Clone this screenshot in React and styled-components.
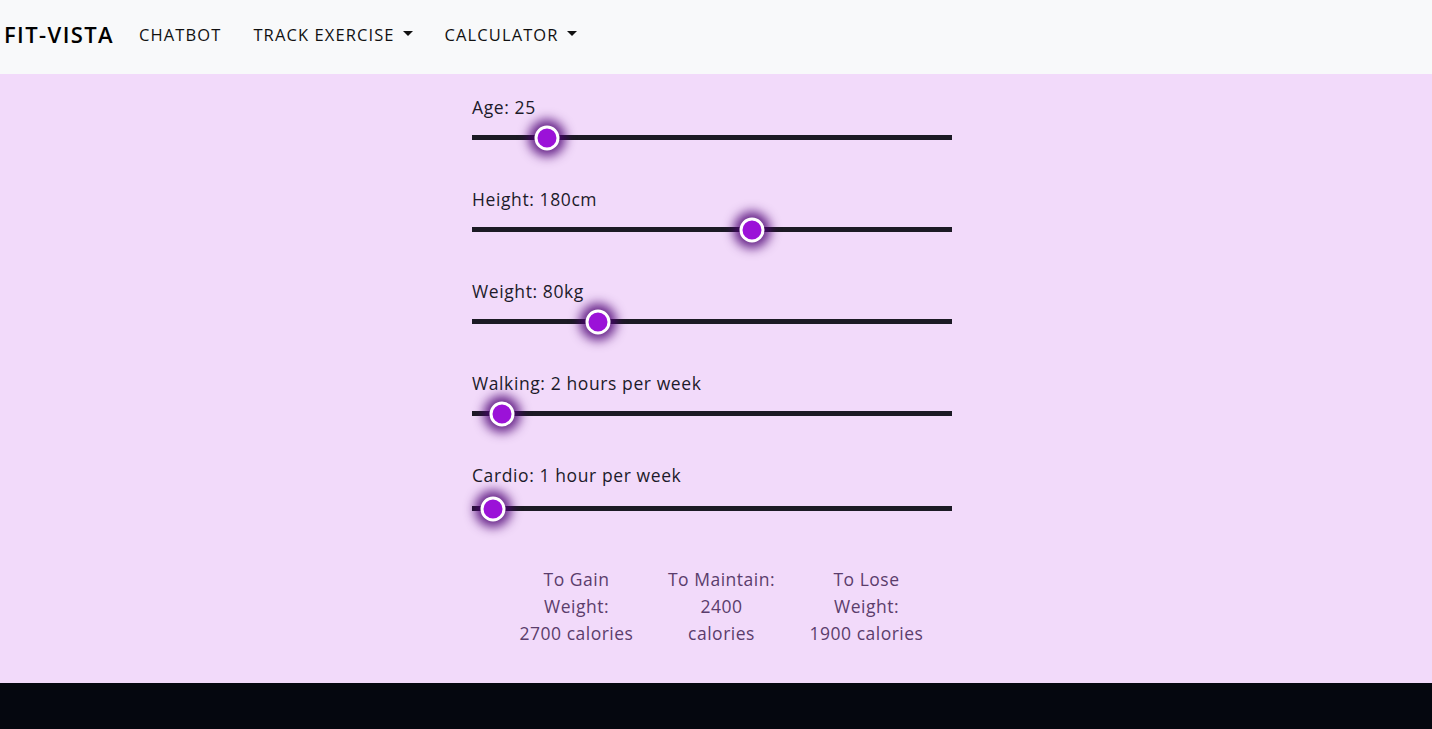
// Dependencies
// -----------------------------------------------
import React from 'react';
import styled, { createGlobalStyle } from 'styled-components';

// Styles
// -----------------------------------------------
const GlobalStyle = createGlobalStyle`
  html, body {
    margin: 0;
    padding: 0;
    background: #f2dafa;
  }
  body {
    font-family: "Open Sans", "Noto Sans", sans-serif;
  }
`;

const Page = styled.div`
  display: flex;
  flex-direction: column;
  min-height: 729px;
`;

const NavBar = styled.nav`
  height: 74px;
  background: #f8f9fa;
  display: flex;
  align-items: center;
  padding: 0 4px 6px 4px;
  box-sizing: border-box;
`;

const Brand = styled.a`
  font-size: 22px;
  font-weight: 600;
  color: #000;
  letter-spacing: 1.4px;
  margin-right: 25px;
  text-decoration: none;
`;

const NavLink = styled.a`
  font-size: 16.5px;
  letter-spacing: 1.1px;
  color: #111;
  text-transform: uppercase;
  padding: 8px 0;
  margin-right: ${p => p.gap}px;
  display: flex;
  align-items: center;
  gap: 8px;
  text-decoration: none;
`;

const Caret = styled.span`
  width: 0;
  height: 0;
  border-left: 5px solid transparent;
  border-right: 5px solid transparent;
  border-top: 5px solid #111;
  margin-top: -2px;
`;

const Main = styled.main`
  flex: 1;
  background: #f2dafa;
  display: flex;
  justify-content: center;
  padding: 21px 0 22px 0;
`;

const Calculator = styled.div`
  width: 480px;
  margin-left: -8px;
  display: flex;
  flex-direction: column;
`;

const Field = styled.div`
  display: flex;
  flex-direction: column;
  margin-bottom: ${p => (p.last ? 45 : 37)}px;
`;

const Label = styled.label`
  font-size: 17.5px;
  letter-spacing: 0.6px;
  color: #1d1a2a;
  line-height: 24px;
  white-space: nowrap;
  margin-bottom: ${p => (p.last ? 9 : 6)}px;
`;

const Track = styled.div`
  position: relative;
  height: 5px;
  background: #1c1a24;
  margin: 10px 0;
`;

const Thumb = styled.span`
  position: absolute;
  top: 50%;
  width: 19px;
  height: 19px;
  border: 3px solid #fff;
  border-radius: 50%;
  background: #9b12d8;
  transform: translate(-50%, -50%);
  box-shadow: 0 0 11px 6px rgba(75, 0, 115, 0.85);
`;

const Results = styled.div`
  display: grid;
  grid-template-columns: repeat(3, 132px);
  column-gap: 13px;
  justify-content: center;
  margin-left: 19px;
`;

const Result = styled.div`
  text-align: center;
  font-size: 17.5px;
  letter-spacing: 0.5px;
  line-height: 27px;
  white-space: nowrap;
  color: #5b3d6c;
`;

const Footer = styled.footer`
  height: 46px;
  background: #05070f;
`;

// Data
// -----------------------------------------------
const fields = [
  { label: 'Age: 25', value: 25, min: 18, max: 68 },
  { label: 'Height: 180cm', value: 180, min: 100, max: 236 },
  { label: 'Weight: 80kg', value: 80, min: 40, max: 200 },
  { label: 'Walking: 2 hours per week', value: 2, min: 0, max: 48 },
  { label: 'Cardio: 1 hour per week', value: 1, min: 0, max: 46 }
];

const results = [
  ['To Gain', 'Weight:', '2700 calories'],
  ['To Maintain:', '2400', 'calories'],
  ['To Lose', 'Weight:', '1900 calories']
];

// -----------------------------------------------
// COMPONENT->SLIDER -----------------------------
// -----------------------------------------------
const Slider = ({ value, min, max }) => {
  const f = (value - min) / (max - min);
  return (
    <Track>
      <Thumb style={{ left: `calc(11px + ${f} * (100% - 22px))` }} />
    </Track>
  );
};

// -----------------------------------------------
// COMPONENT->APP --------------------------------
// -----------------------------------------------
export default function App() {
  return (
    <Page>
      <GlobalStyle />
      <NavBar>
        <Brand>FIT-VISTA</Brand>
        <NavLink gap={32}>Chatbot</NavLink>
        <NavLink gap={32}>
          Track Exercise <Caret />
        </NavLink>
        <NavLink gap={0}>
          Calculator <Caret />
        </NavLink>
      </NavBar>
      <Main>
        <Calculator>
          {fields.map((field, i) => (
            <Field key={field.label} last={i === fields.length - 1}>
              <Label last={i === fields.length - 1}>{field.label}</Label>
              <Slider value={field.value} min={field.min} max={field.max} />
            </Field>
          ))}
          <Results>
            {results.map(lines => (
              <Result key={lines[0]}>
                {lines.map(line => (
                  <div key={line}>{line}</div>
                ))}
              </Result>
            ))}
          </Results>
        </Calculator>
      </Main>
      <Footer />
    </Page>
  );
}
